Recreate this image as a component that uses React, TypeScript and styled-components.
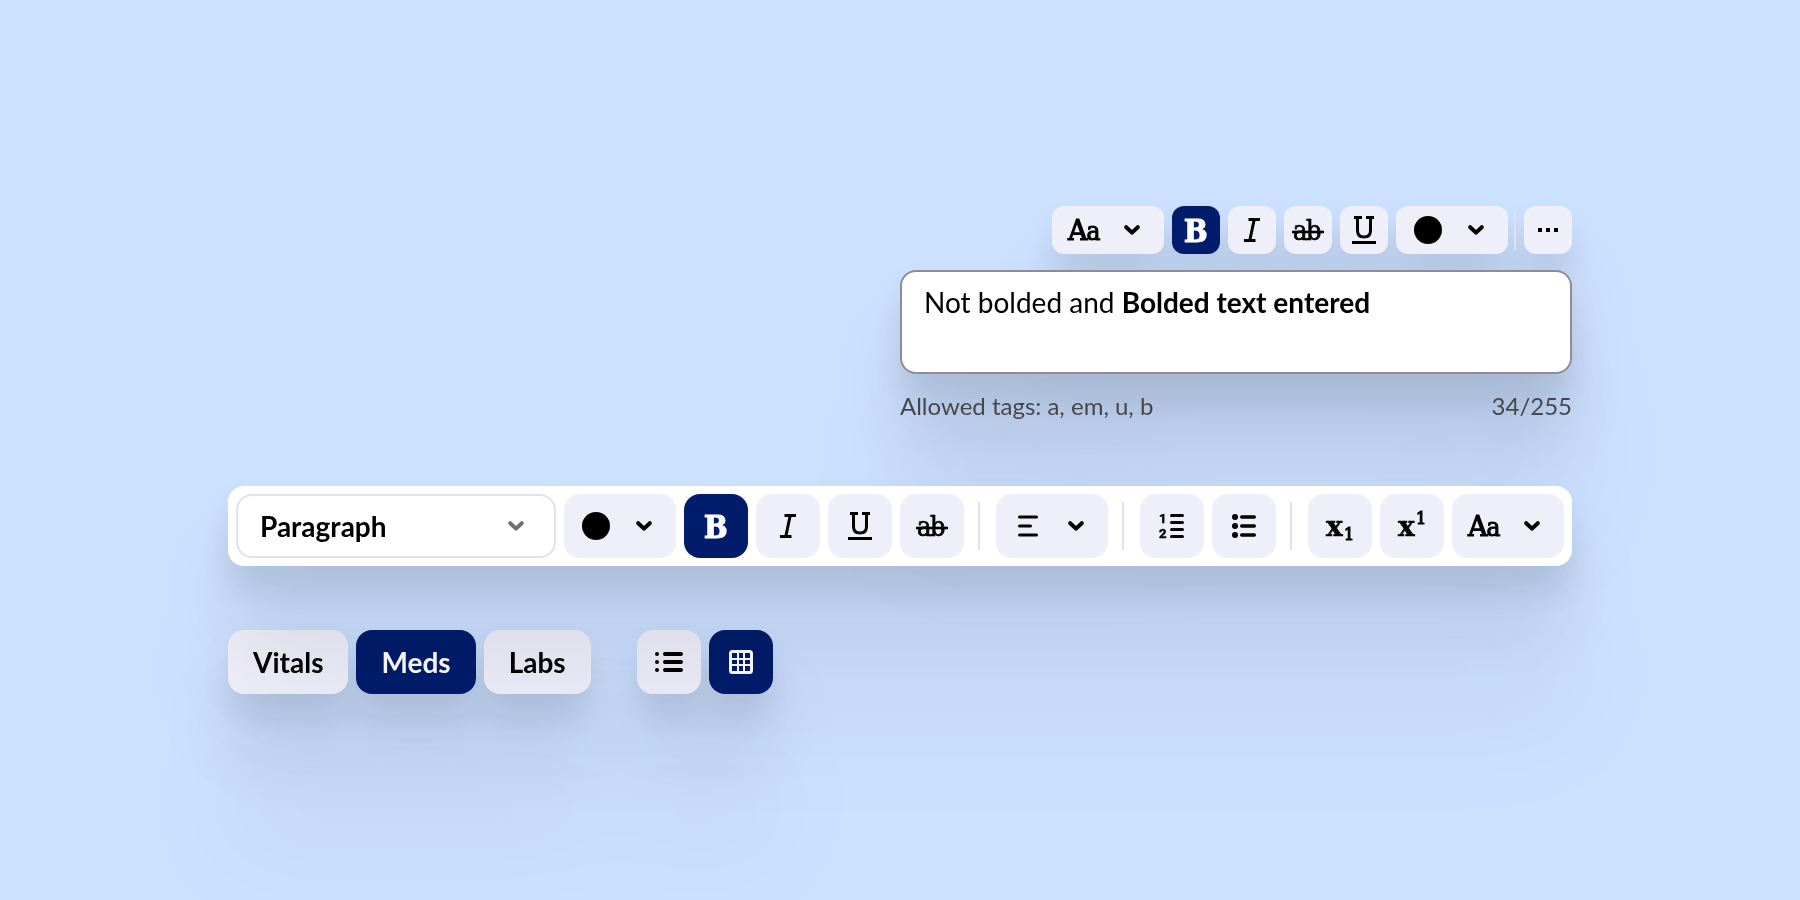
import React from "react";
import styled, { createGlobalStyle, css } from "styled-components";

const navy = "#001c6a";
const chip = "#efeffa";

const GlobalStyle = createGlobalStyle`
  *, *::before, *::after { box-sizing: border-box; }
  body { margin: 0; background: #cce0ff; font-family: Lato, sans-serif; color: #000; }
  button, select { font: inherit; color: inherit; margin: 0; }
`;

const Page = styled.main`
  min-height: 100vh;
  display: flex;
  align-items: center;
  justify-content: center;
  padding: 24px;
  overflow: hidden;
`;

const Stack = styled.div`
  display: flex;
  flex-direction: column;
  gap: 64px;
  width: 100%;
  max-width: 1344px;
`;

const lifted = css`
  filter: drop-shadow(0 24px 16px rgba(0, 10, 10, 0.1)) drop-shadow(0 64px 36px rgba(0, 0, 10, 0.08))
    drop-shadow(0 140px 52px rgba(20, 0, 60, 0.05));
`;

const Editor = styled.section`
  ${lifted}
  position: relative;
  z-index: 1;
  align-self: flex-end;
  width: 50%;
  display: flex;
  flex-direction: column;
  gap: 16px;
`;

const MiniToolbar = styled.div`
  display: flex;
  justify-content: flex-end;
  gap: 8px;
`;

const Toolbar = styled.div`
  ${lifted}
  position: relative;
  z-index: 2;
  display: flex;
  gap: 8px;
  padding: 8px;
  border-radius: 16px;
  background: #fff;
`;

const ToolButton = styled.button<{ $small?: boolean; $active?: boolean; $menu?: boolean }>`
  display: flex;
  flex: none;
  align-items: center;
  justify-content: ${(p) => (p.$menu ? "flex-start" : "center")};
  gap: 24px;
  width: ${(p) => (p.$menu ? 112 : p.$small ? 48 : 64)}px;
  height: ${(p) => (p.$small ? 48 : 64)}px;
  padding: ${(p) => (p.$menu ? "0 24px 0 16px" : "0")};
  border: 0;
  border-radius: ${(p) => (p.$small ? 12 : 16)}px;
  background: ${(p) => (p.$active ? navy : chip)};
  color: ${(p) => (p.$active ? "#fff" : "#000")};
  cursor: pointer;
`;

const Divider = styled.span<{ $small?: boolean }>`
  flex: none;
  align-self: center;
  width: 2px;
  height: ${(p) => (p.$small ? 40 : 48)}px;
  margin: ${(p) => (p.$small ? "0 0 0 -2px" : "0 8px 0 6px")};
  background: #e0dfec;
`;

const Field = styled.div`
  min-height: 104px;
  padding: 14px 22px;
  border: 2px solid #8e8c98;
  border-radius: 16px;
  background: #fff;
  font-size: 28px;
  line-height: 32px;
  outline: none;
`;

const Hints = styled.div`
  display: flex;
  justify-content: space-between;
  font-size: 24px;
  line-height: 32px;
  color: #45464c;
`;

const SelectBox = styled.label`
  position: relative;
  flex: 1;
  display: flex;
  align-items: center;
`;

const Select = styled.select`
  width: 100%;
  height: 64px;
  padding: 0 64px 0 22px;
  border: 2px solid #e3e1ef;
  border-radius: 16px;
  background: #fff;
  appearance: none;
  font-size: 28px;
  font-weight: 700;
`;

const SelectArrow = styled.span`
  position: absolute;
  right: 32px;
  display: flex;
  color: #6d7078;
  pointer-events: none;
`;

const Switches = styled.div`
  ${lifted}
  display: flex;
  flex-wrap: wrap;
  gap: 46px;
`;

const Group = styled.div`
  display: flex;
  gap: 8px;
`;

const Tab = styled.button<{ $active?: boolean }>`
  height: 64px;
  padding: 0 25px;
  border: 0;
  border-radius: 16px;
  background: ${(p) => (p.$active ? navy : chip)};
  color: ${(p) => (p.$active ? "#fff" : "#000")};
  font-size: 28px;
  font-weight: 700;
  cursor: pointer;
`;

const Svg = styled.svg`
  display: block;
  flex: none;
  overflow: visible;
  fill: none;
  stroke: currentColor;
  stroke-linecap: round;
`;

const Slab = styled.text<{ $bold?: boolean; $condensed?: boolean }>`
  fill: currentColor;
  stroke-linejoin: miter;
  font-family: ${(p) => (p.$condensed ? '"DejaVu Serif Condensed", ' : "")}"DejaVu Serif", serif;
  font-weight: ${(p) => (p.$bold ? 700 : 400)};
`;

const Numeral = styled.text`
  fill: currentColor;
  stroke-width: 0.5;
  font-family: Roboto, sans-serif;
  font-size: 13px;
  font-weight: 700;
`;

const Icon = ({ children }: { children: React.ReactNode }) => (
  <Svg width="32" height="32" viewBox="0 0 32 32" aria-hidden="true">{children}</Svg>
);

const Chevron = () => (
  <Svg width="16" height="10" viewBox="0 0 16 10" strokeWidth="4" strokeLinejoin="round" aria-hidden="true">
    <path d="M2.2 2.2 8 7.6l5.8-5.4" />
  </Svg>
);

const BoldIcon = () => (
  <Icon><Slab $bold $condensed x="4" y="27.5" fontSize="31" strokeWidth="1.2">B</Slab></Icon>
);
const ItalicIcon = () => (
  <Icon><path strokeWidth="3" strokeLinecap="butt" d="M12.5 5.5H24M8 26.5h11.5M18.2 5.5l-4.4 21" /></Icon>
);
const UnderlineIcon = () => (
  <Icon>
    <path strokeWidth="3" strokeLinecap="butt" d="M6 3.5h8M18 3.5h8M9.5 3.5v13c0 4.2 2.4 6.5 6.5 6.5s6.5-2.3 6.5-6.5v-13M4 28.5h24" />
  </Icon>
);
const StrikeIcon = () => (
  <Icon>
    <Slab $condensed x="1" y="26" fontSize="27" strokeWidth="0.7">a</Slab>
    <Slab $condensed x="14" y="26" fontSize="27" strokeWidth="0.7">b</Slab>
    <path strokeWidth="2.6" strokeLinecap="butt" d="M0 18h32" />
  </Icon>
);
const CaseIcon = () => (
  <Icon>
    <Slab x="0" y="25.5" fontSize="27" strokeWidth="1.2">A</Slab>
    <Slab $condensed x="18.5" y="25.5" fontSize="26" strokeWidth="1">a</Slab>
  </Icon>
);
const SwatchIcon = () => <Icon><circle cx="16" cy="16" r="14" fill="currentColor" stroke="none" /></Icon>;
const MoreIcon = () => (
  <Icon><path strokeWidth="4" strokeLinecap="butt" d="M6 16h4M14 16h4M22 16h4" /></Icon>
);
const AlignIcon = () => <Icon><path strokeWidth="3.2" d="M7.6 7h16.8M7.6 16h10.8M7.6 25h16.8" /></Icon>;
const NumberedIcon = () => (
  <Icon>
    <Numeral x="3" y="13">1</Numeral>
    <Numeral x="3" y="28">2</Numeral>
    <path strokeWidth="3" d="M15.5 5.5h11M15.5 12.5h11M15.5 19.5h11M15.5 26.5h11" />
  </Icon>
);
const BulletIcon = () => (
  <Icon>
    <path strokeWidth="3.4" d="M13.7 7h12.6M13.7 16h12.6M13.7 25h12.6" />
    <path strokeWidth="6" d="M7 7h0M7 16h0M7 25h0" />
  </Icon>
);
const SubscriptIcon = () => (
  <Icon>
    <Slab $bold x="2" y="26" fontSize="28" strokeWidth="0.5">x</Slab>
    <Slab x="20" y="29.5" fontSize="16" strokeWidth="1.2">1</Slab>
  </Icon>
);
const SuperscriptIcon = () => (
  <Icon>
    <Slab $bold x="2" y="26" fontSize="28" strokeWidth="0.5">x</Slab>
    <Slab x="20" y="13.5" fontSize="16" strokeWidth="1.2">1</Slab>
  </Icon>
);
const ListIcon = () => (
  <Icon>
    <path strokeWidth="4" d="M12 8h16M12 16h16M12 24h16M4 8h0M4 16h0M4 24h0" />
  </Icon>
);
const GridIcon = () => (
  <Icon>
    <rect x="5.5" y="5.5" width="21" height="21" rx="2" strokeWidth="3" />
    <path strokeWidth="2" strokeLinecap="butt" d="M13 5v22M19 5v22M5 13h22M5 19h22" />
  </Icon>
);

export default function App() {
  return (
    <>
      <GlobalStyle />
      <Page>
        <Stack>
          <Editor>
            <MiniToolbar role="toolbar" aria-label="Quick formatting">
              <ToolButton $small $menu aria-label="Letter case"><CaseIcon /><Chevron /></ToolButton>
              <ToolButton $small $active aria-label="Bold" aria-pressed="true"><BoldIcon /></ToolButton>
              <ToolButton $small aria-label="Italic"><ItalicIcon /></ToolButton>
              <ToolButton $small aria-label="Strikethrough"><StrikeIcon /></ToolButton>
              <ToolButton $small aria-label="Underline"><UnderlineIcon /></ToolButton>
              <ToolButton $small $menu aria-label="Text color"><SwatchIcon /><Chevron /></ToolButton>
              <Divider $small />
              <ToolButton $small aria-label="More"><MoreIcon /></ToolButton>
            </MiniToolbar>
            <Field role="textbox" aria-label="Formatted text" aria-describedby="tags" contentEditable suppressContentEditableWarning spellCheck={false}>
              Not bolded and <b>Bolded text entered</b>
            </Field>
            <Hints>
              <span id="tags">Allowed tags: a, em, u, b</span>
              <span>34/255</span>
            </Hints>
          </Editor>

          <Toolbar role="toolbar" aria-label="Formatting">
            <SelectBox>
              <Select aria-label="Text style" defaultValue="Paragraph">
                <option>Paragraph</option>
              </Select>
              <SelectArrow><Chevron /></SelectArrow>
            </SelectBox>
            <ToolButton $menu aria-label="Text color"><SwatchIcon /><Chevron /></ToolButton>
            <ToolButton $active aria-label="Bold" aria-pressed="true"><BoldIcon /></ToolButton>
            <ToolButton aria-label="Italic"><ItalicIcon /></ToolButton>
            <ToolButton aria-label="Underline"><UnderlineIcon /></ToolButton>
            <ToolButton aria-label="Strikethrough"><StrikeIcon /></ToolButton>
            <Divider />
            <ToolButton $menu aria-label="Alignment"><AlignIcon /><Chevron /></ToolButton>
            <Divider />
            <ToolButton aria-label="Numbered list"><NumberedIcon /></ToolButton>
            <ToolButton aria-label="Bulleted list"><BulletIcon /></ToolButton>
            <Divider />
            <ToolButton aria-label="Subscript"><SubscriptIcon /></ToolButton>
            <ToolButton aria-label="Superscript"><SuperscriptIcon /></ToolButton>
            <ToolButton $menu aria-label="Letter case"><CaseIcon /><Chevron /></ToolButton>
          </Toolbar>

          <Switches>
            <Group role="tablist" aria-label="Records">
              <Tab role="tab" aria-selected="false">Vitals</Tab>
              <Tab role="tab" aria-selected="true" $active>Meds</Tab>
              <Tab role="tab" aria-selected="false">Labs</Tab>
            </Group>
            <Group role="group" aria-label="View">
              <ToolButton aria-label="List view"><ListIcon /></ToolButton>
              <ToolButton $active aria-label="Grid view" aria-pressed="true"><GridIcon /></ToolButton>
            </Group>
          </Switches>
        </Stack>
      </Page>
    </>
  );
}
